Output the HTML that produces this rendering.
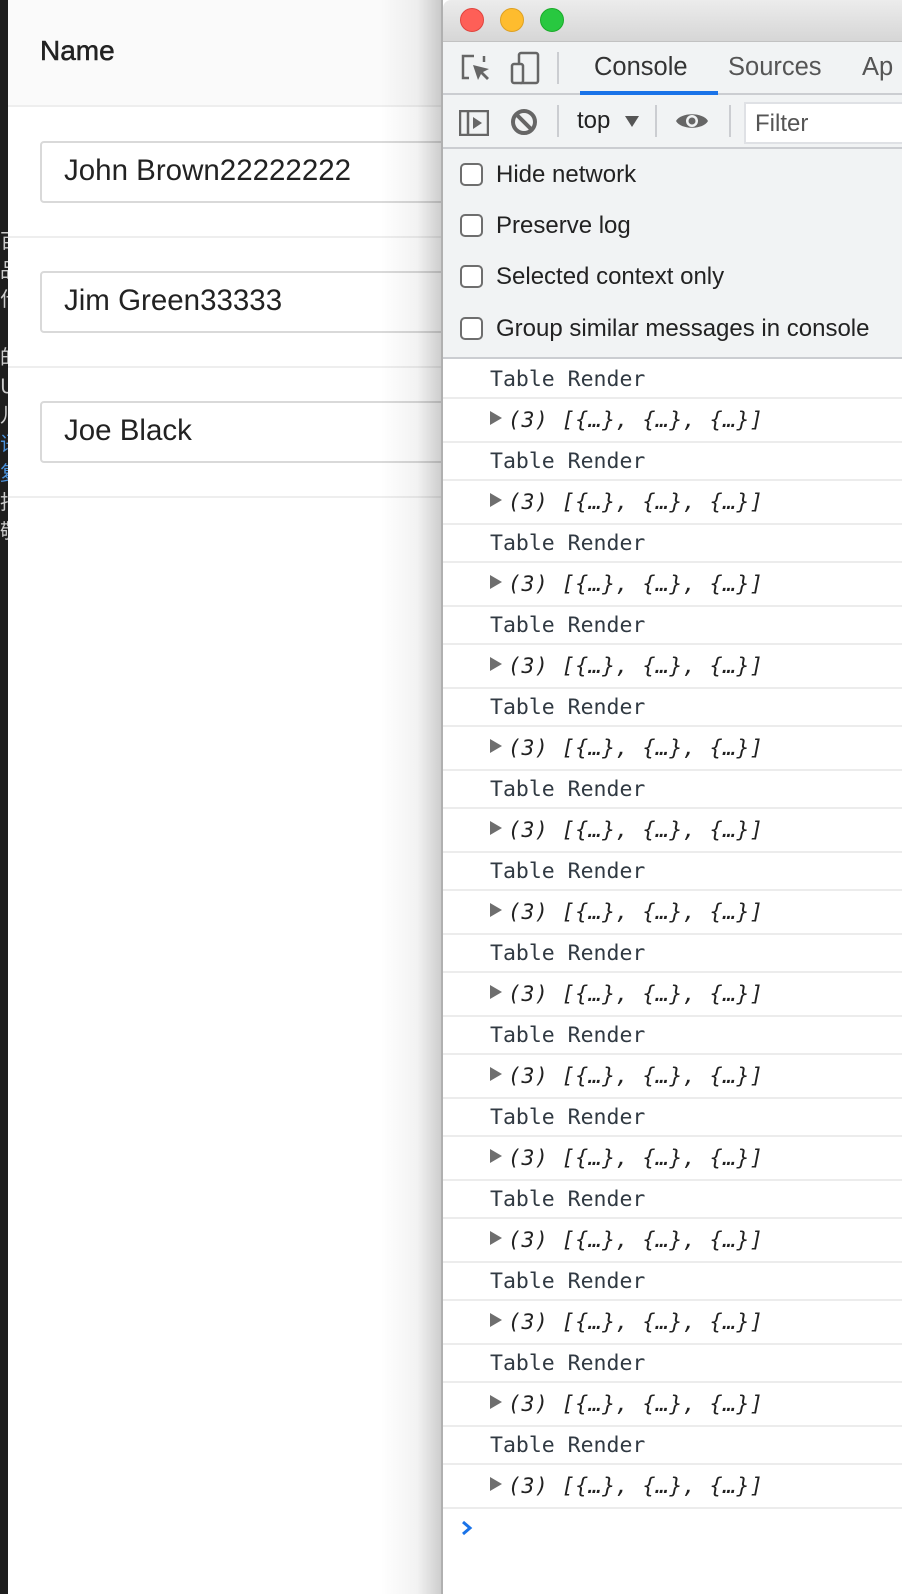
<!DOCTYPE html>
<html><head><meta charset="utf-8"><style>
*{margin:0;padding:0;box-sizing:border-box}
body{width:902px;height:1594px;position:relative;overflow:hidden;background:#fff;font-family:"Liberation Sans",Arial,sans-serif}
.strip{position:absolute;left:0;top:0;width:8px;height:1594px;background:#1e1e1e;overflow:hidden;color:#ccc;font-family:"Noto Sans CJK SC",sans-serif;font-size:20px;line-height:29px}
.hdr{position:absolute;left:8px;top:0;width:440px;height:107px;background:#fafafa;border-bottom:2px solid #eee}
.name{position:absolute;left:32px;top:35px;font-size:28px;font-weight:normal;color:#222;-webkit-text-stroke:0.5px #222}
.rowb{position:absolute;left:8px;width:440px;height:2px;background:#eee}
.inp{position:absolute;left:40px;width:420px;height:62px;border:2px solid #d9d9d9;border-radius:4px;background:#fff;font-size:29.5px;color:#222;padding:11px 0 0 22px}
.shadow{position:absolute;left:380px;top:0;width:62px;height:1594px;background:linear-gradient(to right,rgba(0,0,0,0),rgba(0,0,0,.05) 60%,rgba(0,0,0,.2))}
.dev{position:absolute;left:441px;top:0;width:461px;height:1594px;background:#fff;border-left:2px solid #b0b0b0}
.title{position:absolute;left:0;top:0;width:100%;height:42px;background:linear-gradient(#ececec,#d6d6d6);border-bottom:1px solid #c2c2c2;border-top-left-radius:8px}
.light{position:absolute;top:8px;width:24px;height:24px;border-radius:50%}
.tabs{position:absolute;left:0;top:42px;width:100%;height:53px;background:#f1f3f4;border-bottom:2px solid #cbcdd1}
.tab{position:absolute;top:11px;font-size:25.5px;color:#333}
.tb{position:absolute;left:0;top:95px;width:100%;height:54px;background:#f1f3f4;border-bottom:2px solid #cbcdd1}
.sep{position:absolute;width:2px;background:#cbcdd1}
.opts{position:absolute;left:0;top:149px;width:100%;height:210px;background:#f1f3f4;border-bottom:2px solid #cbcdd1}
.opt{position:absolute;left:17px;font-size:24px;color:#222}
.cb{display:inline-block;width:23px;height:23px;border:2px solid #6e6e6e;border-radius:5px;background:#fff;vertical-align:-4px;margin-right:13px}
.con{position:absolute;left:0;top:361px;width:100%}
.r{height:38px;border-bottom:2px solid #ececec;font-family:"DejaVu Sans Mono",monospace;font-size:21.5px;color:#303942;padding:6px 0 0 47px;white-space:pre}
.a{height:44px;padding-top:9px;font-style:italic;color:#222;letter-spacing:0.5px}
.tri{display:inline-block;width:0;height:0;border-left:12px solid #6e6e6e;border-top:7px solid transparent;border-bottom:7px solid transparent;margin-right:6px;vertical-align:2px}
</style></head><body>
<div class="strip"><div style="padding-top:225px">百<br>品<br>什<br><br>的<br>U<br>儿<br><span style="color:#4a90d9">语<br>复</span><br>指<br>敬</div></div>
<div class="hdr"><div class="name">Name</div></div>
<div class="inp" style="top:141px">John Brown22222222</div>
<div class="rowb" style="top:236px"></div>
<div class="inp" style="top:271px">Jim Green33333</div>
<div class="rowb" style="top:366px"></div>
<div class="inp" style="top:401px">Joe Black</div>
<div class="rowb" style="top:496px"></div>
<div class="shadow"></div>
<div class="dev">
 <div class="title">
  <div class="light" style="left:17px;background:#fe5f57;border:1px solid #e0443e"></div>
  <div class="light" style="left:57px;background:#febc2e;border:1px solid #dea123"></div>
  <div class="light" style="left:97px;background:#28c840;border:1px solid #1aab29"></div>
 </div>
 <div class="tabs">
  <svg style="position:absolute;left:17px;top:10px" width="34" height="34" viewBox="0 0 34 34" fill="none" stroke="#666" stroke-width="2.5"><path d="M14 4H3v22h6"/><path d="M24 4v6"/><path d="M13 13l5 15 3-6 6 6 2-2-6-6 6-3z" fill="#666" stroke="none"/></svg>
  <svg style="position:absolute;left:66px;top:9px" width="34" height="34" viewBox="0 0 34 34" fill="none" stroke="#666" stroke-width="2.5"><rect x="10" y="2" width="19" height="30" rx="2"/><rect x="3" y="13" width="11" height="19" rx="2" fill="#f1f3f4"/></svg>
  <div class="sep" style="left:114px;top:10px;height:32px"></div>
  <div class="tab" style="left:151px">Console</div>
  <div style="position:absolute;left:137px;top:49px;width:138px;height:4px;background:#1a73e8"></div>
  <div class="tab" style="left:285px;color:#555">Sources</div>
  <div class="tab" style="left:419px;color:#555">Ap</div>
 </div>
 <div class="tb">
  <svg style="position:absolute;left:16px;top:15px" width="30" height="26" viewBox="0 0 30 26" fill="none" stroke="#666" stroke-width="2.5"><rect x="1" y="1" width="28" height="24"/><path d="M9 1v24"/><path d="M14 7l9 6-9 6z" fill="#666" stroke="none"/></svg>
  <svg style="position:absolute;left:67px;top:13px" width="28" height="28" viewBox="0 0 28 28" fill="none" stroke="#666" stroke-width="4"><circle cx="14" cy="14" r="11"/><path d="M7 7l14 14"/></svg>
  <div class="sep" style="left:114px;top:10px;height:32px"></div>
  <div style="position:absolute;left:134px;top:12px;font-size:24px;color:#222">top</div>
  <div style="position:absolute;left:182px;top:21px;border-top:11px solid #555;border-left:7px solid transparent;border-right:7px solid transparent"></div>
  <div class="sep" style="left:212px;top:10px;height:32px"></div>
  <svg style="position:absolute;left:232px;top:14px" width="34" height="24" viewBox="0 0 34 24"><path d="M1 12C6 3 28 3 33 12C28 21 6 21 1 12z" fill="#666"/><circle cx="17" cy="12" r="6" fill="#f1f3f4"/><circle cx="17" cy="12" r="3.5" fill="#666"/></svg>
  <div class="sep" style="left:286px;top:10px;height:32px"></div>
  <div style="position:absolute;left:301px;top:7px;width:170px;height:42px;background:#fff;border:2px solid #dfe1e5;font-size:24px;color:#555;padding:6px 0 0 9px">Filter</div>
 </div>
 <div class="opts">
  <div class="opt" style="top:12px"><span class="cb"></span>Hide network</div>
  <div class="opt" style="top:63px"><span class="cb"></span>Preserve log</div>
  <div class="opt" style="top:114px"><span class="cb"></span>Selected context only</div>
  <div class="opt" style="top:166px"><span class="cb"></span>Group similar messages in console</div>
 </div>
 <div class="con">
<div class="r">Table Render</div><div class="r a"><span class="tri"></span>(3) [{…}, {…}, {…}]</div>
<div class="r">Table Render</div><div class="r a"><span class="tri"></span>(3) [{…}, {…}, {…}]</div>
<div class="r">Table Render</div><div class="r a"><span class="tri"></span>(3) [{…}, {…}, {…}]</div>
<div class="r">Table Render</div><div class="r a"><span class="tri"></span>(3) [{…}, {…}, {…}]</div>
<div class="r">Table Render</div><div class="r a"><span class="tri"></span>(3) [{…}, {…}, {…}]</div>
<div class="r">Table Render</div><div class="r a"><span class="tri"></span>(3) [{…}, {…}, {…}]</div>
<div class="r">Table Render</div><div class="r a"><span class="tri"></span>(3) [{…}, {…}, {…}]</div>
<div class="r">Table Render</div><div class="r a"><span class="tri"></span>(3) [{…}, {…}, {…}]</div>
<div class="r">Table Render</div><div class="r a"><span class="tri"></span>(3) [{…}, {…}, {…}]</div>
<div class="r">Table Render</div><div class="r a"><span class="tri"></span>(3) [{…}, {…}, {…}]</div>
<div class="r">Table Render</div><div class="r a"><span class="tri"></span>(3) [{…}, {…}, {…}]</div>
<div class="r">Table Render</div><div class="r a"><span class="tri"></span>(3) [{…}, {…}, {…}]</div>
<div class="r">Table Render</div><div class="r a"><span class="tri"></span>(3) [{…}, {…}, {…}]</div>
<div class="r">Table Render</div><div class="r a"><span class="tri"></span>(3) [{…}, {…}, {…}]</div>
 </div>
 <svg style="position:absolute;left:18px;top:1520px" width="12" height="16" viewBox="0 0 12 16"><path d="M2 2l7 6-7 6" fill="none" stroke="#1a73e8" stroke-width="3"/></svg>
</div>
</body></html>
